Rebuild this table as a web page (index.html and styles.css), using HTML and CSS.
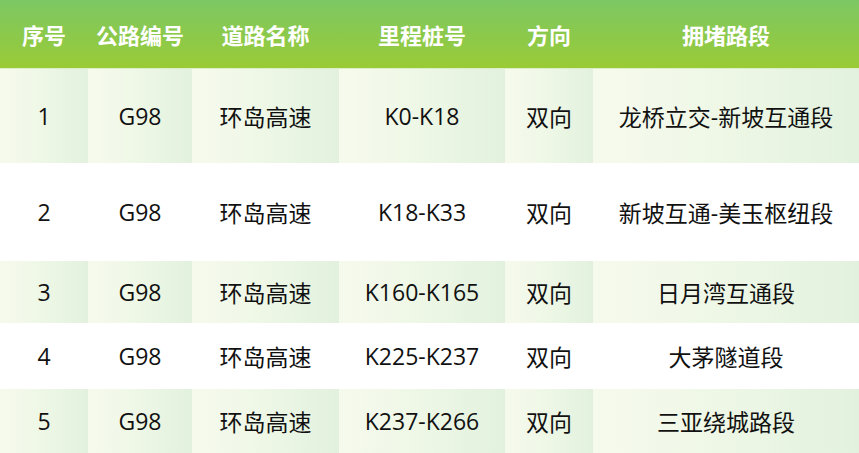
FILE: index.html
```html
<!DOCTYPE html>
<html lang="zh-CN">
<head>
<meta charset="utf-8">
<title>拥堵路段</title>
<link rel="stylesheet" href="styles.css">
</head>
<body>
<table class="jam-table">
  <colgroup>
    <col class="c1"><col class="c2"><col class="c3"><col class="c4"><col class="c5"><col class="c6">
  </colgroup>
  <thead>
    <tr class="head">
      <th>序号</th><th>公路编号</th><th>道路名称</th><th>里程桩号</th><th>方向</th><th>拥堵路段</th>
    </tr>
  </thead>
  <tbody>
    <tr class="r1 shade">
      <td>1</td><td>G98</td><td>环岛高速</td><td>K0-K18</td><td>双向</td><td>龙桥立交-新坡互通段</td>
    </tr>
    <tr class="r2">
      <td>2</td><td>G98</td><td>环岛高速</td><td>K18-K33</td><td>双向</td><td>新坡互通-美玉枢纽段</td>
    </tr>
    <tr class="r3 shade">
      <td>3</td><td>G98</td><td>环岛高速</td><td>K160-K165</td><td>双向</td><td>日月湾互通段</td>
    </tr>
    <tr class="r4">
      <td>4</td><td>G98</td><td>环岛高速</td><td>K225-K237</td><td>双向</td><td>大茅隧道段</td>
    </tr>
    <tr class="r5 shade">
      <td>5</td><td>G98</td><td>环岛高速</td><td>K237-K266</td><td>双向</td><td>三亚绕城路段</td>
    </tr>
  </tbody>
</table>
</body>
</html>
```

FILE: styles.css
```css
html, body {
  margin: 0;
  padding: 0;
  background: #ffffff;
}

body {
  width: 859px;
  height: 453px;
  overflow: hidden;
  font-family: "Open Sans", "Noto Sans CJK SC", sans-serif;
  color: #111111;
}

.jam-table {
  width: 859px;
  border-collapse: collapse;
  table-layout: fixed;
}

.c1 { width: 88px; }
.c2 { width: 104px; }
.c3 { width: 147px; }
.c4 { width: 166px; }
.c5 { width: 88px; }
.c6 { width: 266px; }

.jam-table th,
.jam-table td {
  padding: 0;
  text-align: center;
  vertical-align: middle;
  white-space: nowrap;
}

.head th {
  height: 68px;
  font-family: "Noto Sans CJK SC", sans-serif;
  font-size: 22px;
  font-weight: 700;
  color: #ffffff;
  background: linear-gradient(to bottom, #7dc865 0%, #8bc94c 50%, #9acb36 100%);
  border-bottom: 1px solid #d9efc4;
}

.jam-table td {
  font-size: 23px;
  font-family: "Open Sans", "Noto Sans CJK SC", sans-serif;
  color: #111111;
}

.shade td {
  background: linear-gradient(to right, #f6faed 0%, #eef7e6 50%, #e2f1de 100%);
}

.r1 td { height: 94px; }
.r2 td { height: 98px; }
.r3 td { height: 62px; }
.r4 td { height: 66px; }
.r5 td { height: 64px; }
```
